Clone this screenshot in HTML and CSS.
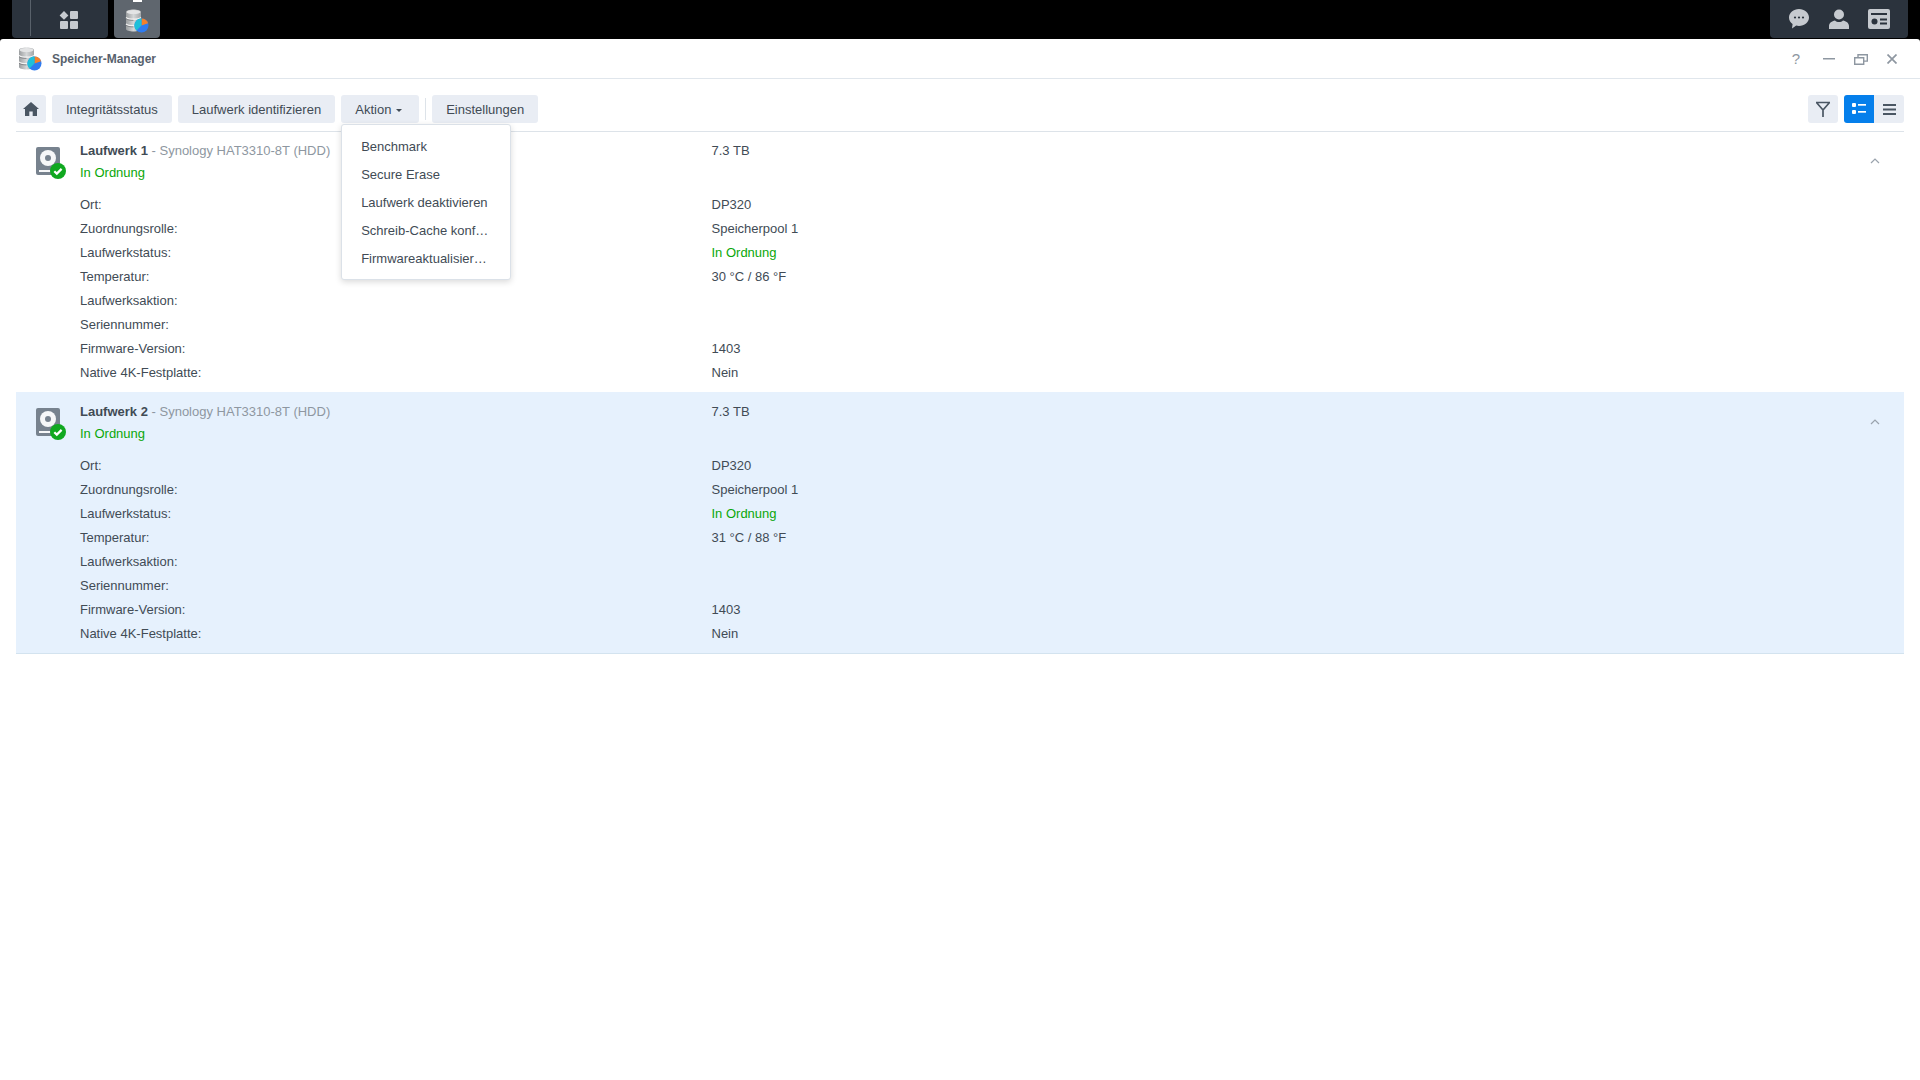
FILE: index.html
```html
<!DOCTYPE html>
<html lang="de">
<head>
    <meta charset="UTF-8">
    <meta name="viewport" content="width=device-width, initial-scale=1.0">
    <title>Speicher-Manager</title>
    <link rel="stylesheet" href="styles.css">
</head>
<body>
    <svg class="defs" width="0" height="0">
        <defs>
            <linearGradient id="disk-metal" x1="0" y1="0" x2="1" y2="0">
                <stop offset="0" stop-color="#9a9d9f"/>
                <stop offset="0.5" stop-color="#d4d6d7"/>
                <stop offset="1" stop-color="#a3a6a8"/>
            </linearGradient>
        </defs>
        <symbol id="storage" viewBox="0 0 24 24">
            <path d="M1 3c0-1.400 3.400-2.500 7.500-2.500S16 1.600 16 3v17c0 1.400-3.400 2.500-7.500 2.500S1 21.400 1 20z" fill="url(#disk-metal)"/>
            <ellipse cx="8.500" cy="3" rx="7" ry="2" fill="#e3e4e5"/>
            <path d="M1 8.500c1.500 1.200 4 1.700 7.500 1.700S14.500 9.700 16 8.500M1 15c1.500 1.200 4 1.700 7.500 1.700S14.500 16.200 16 15" fill="none" stroke="#f3f3f3" stroke-width="1.300"/>
            <path d="M1 9.700c1.500 1.200 4 1.700 7.500 1.700M1 16.200c1.500 1.200 4 1.700 7.500 1.700" fill="none" stroke="#76797c" stroke-width=".8"/>
            <circle cx="16.500" cy="16.500" r="7" fill="#2f7bf0"/>
            <path d="M16.500 16.500V9.500a7 7 0 0 1 6.600 4.800z" fill="#f5812a"/>
            <path d="M16.500 16.500l-5 4.900a7 7 0 0 1 5-11.900z" fill="#1fc0d8"/>
        </symbol>
        <symbol id="disk" viewBox="0 0 24 28">
            <rect width="24" height="28" rx="2" fill="#77828e"/>
            <circle cx="12" cy="11" r="8" fill="#f6f7f8"/>
            <circle cx="12" cy="11" r="3" fill="#77828e"/>
            <rect x="3" y="23" width="12" height="2" fill="#f6f7f8"/>
        </symbol>
        <symbol id="ok" viewBox="0 0 16 16">
            <circle cx="8" cy="8" r="8" fill="#10a820"/>
            <path d="M4.300 8.200l2.500 2.400 4.800-4.700" fill="none" stroke="#fff" stroke-width="2.200"/>
        </symbol>
        <symbol id="chevron" viewBox="0 0 10 6">
            <path d="M1 5l4-4 4 4" fill="none" stroke="#9aa3ad" stroke-width="1.200"/>
        </symbol>
    </svg>

    <div class="taskbar">
        <div class="task-left">
            <div class="task-btn task-main">
                <span class="task-divider"></span>
                <svg class="task-grid" width="20" height="18" viewBox="0 0 20 18">
                    <path d="M5 0l4.400 4.400L5 8.800.6 4.400z" fill="#c6cacf"/>
                    <rect x="11" y="0" width="8" height="8" rx="1" fill="#c6cacf"/>
                    <rect x="1" y="10" width="8" height="8" rx="1" fill="#c6cacf"/>
                    <rect x="11" y="10" width="8" height="8" rx="1" fill="#c6cacf"/>
                </svg>
            </div>
            <div class="task-btn task-app">
                <span class="task-mark"></span>
                <svg class="task-app-icon" width="24" height="24"><use href="#storage"/></svg>
            </div>
        </div>
        <div class="task-right">
            <svg width="20" height="20" viewBox="0 0 20 20">
                <path d="M10 0c5.500 0 10 3.800 10 8.500S15.500 17 10 17c-1 0-1.900-.1-2.800-.4L3 19.500l.6-4.500C1.400 13.500 0 11.100 0 8.500 0 3.800 4.500 0 10 0z" fill="#c6cacf"/>
                <circle cx="6" cy="8.500" r="1.100" fill="#2b333d"/><circle cx="10" cy="8.500" r="1.100" fill="#2b333d"/><circle cx="14" cy="8.500" r="1.100" fill="#2b333d"/>
            </svg>
            <svg width="20" height="20" viewBox="0 0 20 20">
                <circle cx="10" cy="5.500" r="5" fill="#c6cacf"/>
                <path d="M0 20v-3c0-3 3-5 6-5.500 1 1 2.500 1.500 4 1.500s3-.5 4-1.500c3 .5 6 2.500 6 5.500v3z" fill="#c6cacf"/>
            </svg>
            <svg class="task-card" width="22" height="20" viewBox="0 0 22 20">
                <rect width="22" height="20" rx="2" fill="#c6cacf"/>
                <rect x="3" y="4" width="16" height="2" fill="#2b333d"/>
                <circle cx="6.500" cy="12.500" r="3" fill="#2b333d"/>
                <rect x="12" y="9.500" width="7" height="2" fill="#2b333d"/>
                <rect x="12" y="13.500" width="7" height="2" fill="#2b333d"/>
            </svg>
        </div>
    </div>

    <div class="window">
        <div class="titlebar">
            <svg class="title-icon" width="24" height="24"><use href="#storage"/></svg>
            <span class="title-text">Speicher-Manager</span>
            <div class="title-tools">
                <span class="help">?</span>
                <svg width="12" height="12" viewBox="0 0 12 12"><rect y="5" width="12" height="1.500" fill="#8e97a1"/></svg>
                <svg width="14" height="12" viewBox="0 0 14 12"><path d="M.7 4.700h9v6.600h-9zM4 4.500V1.700h9.300v6.400h-3.400" fill="none" stroke="#8e97a1" stroke-width="1.400"/></svg>
                <svg width="10" height="10" viewBox="0 0 10 10"><path d="M.5.500l9 9M9.500.5l-9 9" stroke="#8e97a1" stroke-width="1.700"/></svg>
            </div>
        </div>

        <div class="toolbar">
            <button class="btn btn-icon">
                <svg width="16" height="14" viewBox="0 0 16 14"><path d="M8 0l8 7h-2v7H9.700V9.500H6.300V14H2V7H0z" fill="#4a5663"/></svg>
            </button>
            <button class="btn">Integritätsstatus</button>
            <button class="btn">Laufwerk identifizieren</button>
            <div class="dropdown">
                <button class="btn btn-action">Aktion <span class="caret"></span></button>
                <ul class="menu">
                    <li>Benchmark</li>
                    <li>Secure Erase</li>
                    <li>Laufwerk deaktivieren</li>
                    <li>Schreib-Cache konf…</li>
                    <li>Firmwareaktualisier…</li>
                </ul>
            </div>
            <span class="tool-sep"></span>
            <button class="btn">Einstellungen</button>
            <div class="toolbar-right">
                <button class="btn btn-icon">
                    <svg width="16" height="16" viewBox="0 0 16 16"><path d="M1 1.500h14M1.500 1.500L8 9l6.500-7.500M8 8.500V16" fill="none" stroke="#4a5663" stroke-width="1.700"/></svg>
                </button>
                <div class="view-switch">
                    <button class="btn btn-icon view-on">
                        <svg width="14" height="12" viewBox="0 0 14 12"><rect width="4" height="4" rx="1" fill="#fff"/><rect y="7" width="4" height="4" rx="1" fill="#fff"/><rect x="6" y="1" width="8" height="1.700" fill="#fff"/><rect x="6" y="8" width="8" height="1.700" fill="#fff"/></svg>
                    </button>
                    <button class="btn btn-icon">
                        <svg width="13" height="11" viewBox="0 0 13 11"><rect width="13" height="2" fill="#4a5663"/><rect y="4.500" width="13" height="2" fill="#4a5663"/><rect y="9" width="13" height="2" fill="#4a5663"/></svg>
                    </button>
                </div>
            </div>
        </div>

        <div class="drive-list">
            <div class="drive">
                <div class="drive-icon">
                    <svg width="24" height="28"><use href="#disk"/></svg>
                    <svg class="drive-ok" width="16" height="16"><use href="#ok"/></svg>
                </div>
                <div class="drive-body">
                    <div class="detail drive-name">
                        <span><b>Laufwerk 1</b><span class="muted"> - Synology HAT3310-8T (HDD)</span></span>
                        <span>7.3 TB</span>
                    </div>
                    <div class="drive-status good">In Ordnung</div>
                    <div class="detail"><span>Ort:</span><span>DP320</span></div>
                    <div class="detail"><span>Zuordnungsrolle:</span><span>Speicherpool 1</span></div>
                    <div class="detail"><span>Laufwerkstatus:</span><span class="good">In Ordnung</span></div>
                    <div class="detail"><span>Temperatur:</span><span>30 °C / 86 °F</span></div>
                    <div class="detail"><span>Laufwerksaktion:</span><span></span></div>
                    <div class="detail"><span>Seriennummer:</span><span></span></div>
                    <div class="detail"><span>Firmware-Version:</span><span>1403</span></div>
                    <div class="detail"><span>Native 4K-Festplatte:</span><span>Nein</span></div>
                </div>
                <svg class="drive-toggle" width="10" height="6"><use href="#chevron"/></svg>
            </div>

            <div class="drive drive-selected">
                <div class="drive-icon">
                    <svg width="24" height="28"><use href="#disk"/></svg>
                    <svg class="drive-ok" width="16" height="16"><use href="#ok"/></svg>
                </div>
                <div class="drive-body">
                    <div class="detail drive-name">
                        <span><b>Laufwerk 2</b><span class="muted"> - Synology HAT3310-8T (HDD)</span></span>
                        <span>7.3 TB</span>
                    </div>
                    <div class="drive-status good">In Ordnung</div>
                    <div class="detail"><span>Ort:</span><span>DP320</span></div>
                    <div class="detail"><span>Zuordnungsrolle:</span><span>Speicherpool 1</span></div>
                    <div class="detail"><span>Laufwerkstatus:</span><span class="good">In Ordnung</span></div>
                    <div class="detail"><span>Temperatur:</span><span>31 °C / 88 °F</span></div>
                    <div class="detail"><span>Laufwerksaktion:</span><span></span></div>
                    <div class="detail"><span>Seriennummer:</span><span></span></div>
                    <div class="detail"><span>Firmware-Version:</span><span>1403</span></div>
                    <div class="detail"><span>Native 4K-Festplatte:</span><span>Nein</span></div>
                </div>
                <svg class="drive-toggle" width="10" height="6"><use href="#chevron"/></svg>
            </div>
        </div>
    </div>
</body>
</html>
```

FILE: styles.css
```css
html, body {
    height: 100%;
}
body {
    margin: 0;
    background-color: #000;
    font-family: "Liberation Sans", Arial, sans-serif;
    font-size: 13px;
    color: #414b55;
    display: flex;
    flex-direction: column;
    overflow: hidden;
}
.defs {
    position: absolute;
}

/* top bar */
.taskbar {
    height: 39px;
    flex: none;
    display: flex;
    justify-content: space-between;
    background-color: #000;
}
.task-left {
    display: flex;
    gap: 6px;
    padding-left: 12px;
}
.task-btn {
    height: 38px;
    box-sizing: border-box;
    border-radius: 0 0 4px 4px;
    display: flex;
    align-items: center;
    position: relative;
}
.task-main {
    width: 96px;
    background-color: #2b333d;
    justify-content: center;
    padding-left: 18px;
}
.task-divider {
    position: absolute;
    left: 18px;
    top: 0;
    width: 1px;
    height: 36px;
    background-color: #59616a;
}
.task-grid {
    margin-top: 2px;
}
.task-app {
    width: 46px;
    background-color: #5f666e;
    justify-content: center;
}
.task-mark {
    position: absolute;
    left: 19px;
    top: 0;
    width: 9px;
    height: 2px;
    background-color: #fff;
}
.task-app-icon {
    margin-top: 4px;
}
.task-right {
    width: 138px;
    height: 38px;
    margin-right: 12px;
    background-color: #2b333d;
    border-radius: 0 0 4px 4px;
    display: flex;
    align-items: center;
    gap: 20px;
    padding-left: 19px;
    box-sizing: border-box;
}
.task-card {
    margin-left: -1px;
}

/* window */
.window {
    flex: 1;
    background-color: #fff;
    border-radius: 3px 3px 0 0;
    display: flex;
    flex-direction: column;
}
.titlebar {
    height: 39px;
    flex: none;
    margin: 0;
    padding: 0 23px 0 18px;
    border-bottom: 1px solid #e0e6ec;
    display: flex;
    align-items: center;
}
.title-icon {
    margin-right: 10px;
}
.title-text {
    font-size: 12px;
    font-weight: bold;
    color: #57616c;
}
.title-tools {
    margin-left: auto;
    display: flex;
    align-items: center;
    gap: 19px;
}
.help {
    font-size: 15px;
    line-height: 15px;
    margin-right: 4px;
    color: #8e97a1;
}

/* toolbar */
.toolbar {
    height: 28px;
    flex: none;
    margin: 16px 16px 0;
    padding-bottom: 8px;
    border-bottom: 1px solid #dde3e9;
    display: flex;
    gap: 6px;
}
.btn {
    height: 28px;
    padding: 0 14px;
    border: none;
    border-radius: 3px;
    background-color: #e9edf4;
    color: #414b55;
    font-family: inherit;
    font-size: 13px;
    cursor: pointer;
}
.btn-icon {
    width: 30px;
    padding: 0;
    display: flex;
    align-items: center;
    justify-content: center;
}
.btn-action {
    width: 78px;
    padding: 0 3px 0 0;
}
.caret {
    display: inline-block;
    margin-left: 1px;
    vertical-align: 2px;
    border-left: 3px solid transparent;
    border-right: 3px solid transparent;
    border-top: 3px solid #414b55;
}
.dropdown {
    position: relative;
}
.menu {
    position: absolute;
    left: 0;
    top: 29px;
    z-index: 5;
    width: 170px;
    box-sizing: border-box;
    margin: 0;
    padding: 8px 0 6px;
    list-style: none;
    background-color: #fff;
    border: 1px solid #dbe1e8;
    border-radius: 3px;
    box-shadow: 0 2px 6px rgba(0, 0, 0, 0.15);
}
.menu li {
    height: 28px;
    line-height: 28px;
    padding-left: 19px;
    white-space: nowrap;
}
.tool-sep {
    width: 1px;
    height: 22px;
    margin: 3px 0 0;
    background-color: #dde3e9;
}
.toolbar-right {
    margin-left: auto;
    display: flex;
    gap: 6px;
}
.view-switch {
    display: flex;
}
.view-switch .btn {
    border-radius: 0 3px 3px 0;
}
.view-switch .view-on {
    background-color: #057feb;
    border-radius: 3px 0 0 3px;
}

/* drives */
.drive-list {
    margin: 0 16px;
}
.drive {
    position: relative;
    display: flex;
    height: 260px;
    box-sizing: border-box;
    padding: 7px 0 0;
}
.drive-selected {
    height: 262px;
    padding-top: 8px;
    background-color: #e6f1fd;
    border-bottom: 1px solid #d3e3ef;
}
.drive-selected .drive-toggle {
    top: 27px;
}
.drive-icon {
    position: relative;
    width: 64px;
    flex: none;
    padding: 8px 0 0 20px;
    box-sizing: border-box;
}
.drive-ok {
    position: absolute;
    left: 34px;
    top: 24px;
}
.drive-body {
    flex: 1;
}
.detail {
    display: grid;
    grid-template-columns: 631.5px 1fr;
    height: 24px;
    line-height: 24px;
}
.drive-name b {
    color: #414b55;
}
.muted {
    color: #8e97a1;
}
.good {
    color: #0aa70a;
}
.drive-status {
    height: 30px;
    line-height: 20px;
}
.drive-toggle {
    position: absolute;
    right: 24px;
    top: 26px;
}
```
